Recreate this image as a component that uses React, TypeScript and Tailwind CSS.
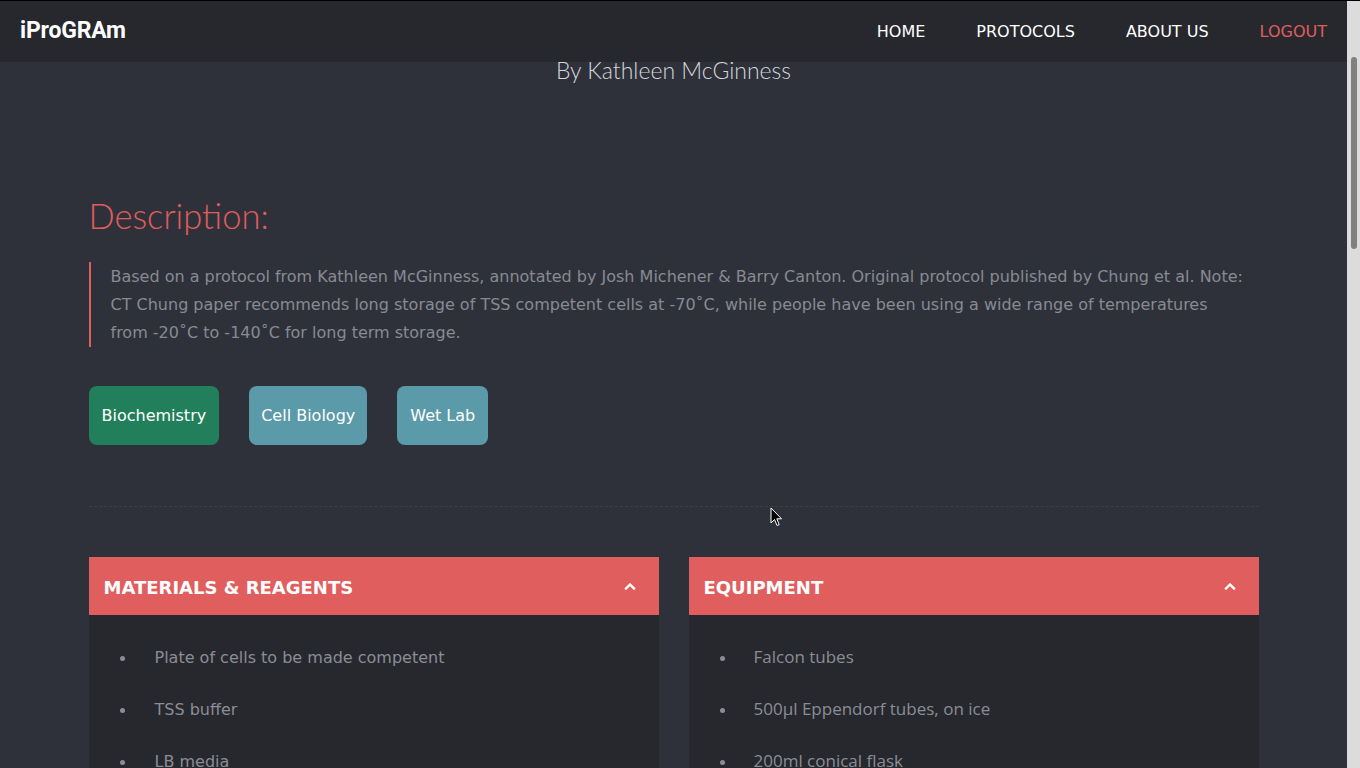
import React from "react";

const materials = ["Plate of cells to be made competent", "TSS buffer", "LB media"];
const equipment = ["Falcon tubes", "500µl Eppendorf tubes, on ice", "200ml conical flask"];

function Chevron() {
  return (
    <svg width="12" height="8" viewBox="0 0 12 8" className="block">
      <polyline points="2,6.5 6,2.5 10,6.5" fill="none" stroke="#ffffff" strokeWidth="2.4" strokeLinecap="square" />
    </svg>
  );
}

function Panel({ title, items, alt }: { title: string; items: string[]; alt?: boolean }) {
  return (
    <div className="w-[570px] bg-[#26282d]">
      <div className="h-[58px] bg-[#e05e5e] flex items-center justify-between pl-[15px] pr-[23px]">
        <span className="pt-[2px] text-white font-bold text-[18px]" style={{ fontFamily: "'DejaVu Sans', sans-serif" }}>
          {title}
        </span>
        <Chevron />
      </div>
      <ul className="pt-[17px] pb-[20px]">
        {items.map((it) => (
          <li key={it} className="h-[52px] flex items-center pl-[31px]">
            <span className="w-[5px] h-[5px] rounded-full bg-[#8a8d96] shrink-0" />
            <span
              className={alt ? "ml-[29px] text-[17px] leading-[24px] -mt-[3px] text-[#8a8d96]" : "ml-[30px] text-[16px] text-[#8a8d96]"}
              style={{ fontFamily: alt ? "'Open Sans', 'Noto Sans', sans-serif" : "'DejaVu Sans', sans-serif" }}
            >
              {it}
            </span>
          </li>
        ))}
      </ul>
    </div>
  );
}

export default function App() {
  return (
    <div className="w-[1360px] h-[768px] overflow-hidden flex flex-col bg-[#000]">
      <div className="h-px bg-black shrink-0" />
      <div className="flex flex-1 min-h-0">
        <div className="relative w-[1347px] bg-[#2f313a] overflow-hidden flex flex-col">
          <nav className="relative z-10 h-[61px] shrink-0 bg-[#26282d] flex items-center justify-between pl-[20px] pr-[20px]">
            <span className="text-white font-bold text-[23px] tracking-[-0.2px]" style={{ fontFamily: "Roboto, 'Open Sans', sans-serif" }}>
              iProGRAm
            </span>
            <div className="flex items-center gap-[51px] text-[16px]" style={{ fontFamily: "'DejaVu Sans', sans-serif" }}>
              <span className="text-white">HOME</span>
              <span className="text-white">PROTOCOLS</span>
              <span className="text-white">ABOUT US</span>
              <span className="text-[#e05d5d]">LOGOUT</span>
            </div>
          </nav>

          <div
            className="-mt-[6px] text-center text-[23px] leading-[28px] font-light text-[#d4d6da]"
            style={{ fontFamily: "Lato, 'Open Sans', sans-serif" }}
          >
            By Kathleen McGinness
          </div>

          <div className="w-[1170px] mx-auto">
            <h2
              className="mt-[112px] text-[34.5px] leading-[40px] font-light text-[#e05d5d]"
              style={{ fontFamily: "Lato, 'Open Sans', sans-serif" }}
            >
              Description:
            </h2>
            <blockquote
              className="mt-[26px] border-l-2 border-[#e05d5d] pl-[20px] pr-[10px] pt-[1px] text-[16px] leading-[28px] text-[#878a93]"
              style={{ fontFamily: "'DejaVu Sans', sans-serif" }}
            >
              Based on a protocol from Kathleen McGinness, annotated by Josh Michener &amp; Barry Canton. Original protocol published by Chung et al. Note: CT Chung paper recommends long storage of TSS competent cells at -70˚C, while people have been using a wide range of temperatures from -20˚C to -140˚C for long term storage.
            </blockquote>

            <div className="mt-[39px] flex gap-[30px] text-[16px] text-white" style={{ fontFamily: "'DejaVu Sans', sans-serif" }}>
              <span className="h-[59px] px-[13px] pt-[1px] flex items-center rounded-[8px] bg-[#217f5b]">Biochemistry</span>
              <span className="h-[59px] px-[12px] pt-[1px] flex items-center rounded-[8px] bg-[#5b9aa8]">Cell Biology</span>
              <span className="h-[59px] px-[13px] pt-[1px] flex items-center rounded-[8px] bg-[#5b9aa8]">Wet Lab</span>
            </div>

            <div className="mt-[61px] border-t border-dashed border-[#3c3f48]" />

            <div className="mt-[50px] flex gap-[30px]">
              <Panel title="MATERIALS & REAGENTS" items={materials} />
              <Panel title="EQUIPMENT" items={equipment} alt />
            </div>
          </div>

          <svg className="absolute left-[770px] top-[506px] z-20" width="12" height="20" viewBox="0 0 12 20">
            <path d="M1 1 L1 16 L4.5 12.5 L7 18.5 L9.2 17.6 L6.8 11.8 L11.5 11.8 Z" fill="#000" stroke="#fff" strokeWidth="1" strokeLinejoin="round" />
          </svg>
        </div>
        <div className="w-[13px] bg-[#dcdcdc] relative shrink-0">
          <div className="absolute left-[4px] top-[56px] w-[6px] h-[192px] rounded-full bg-[#808080]" />
        </div>
      </div>
    </div>
  );
}
